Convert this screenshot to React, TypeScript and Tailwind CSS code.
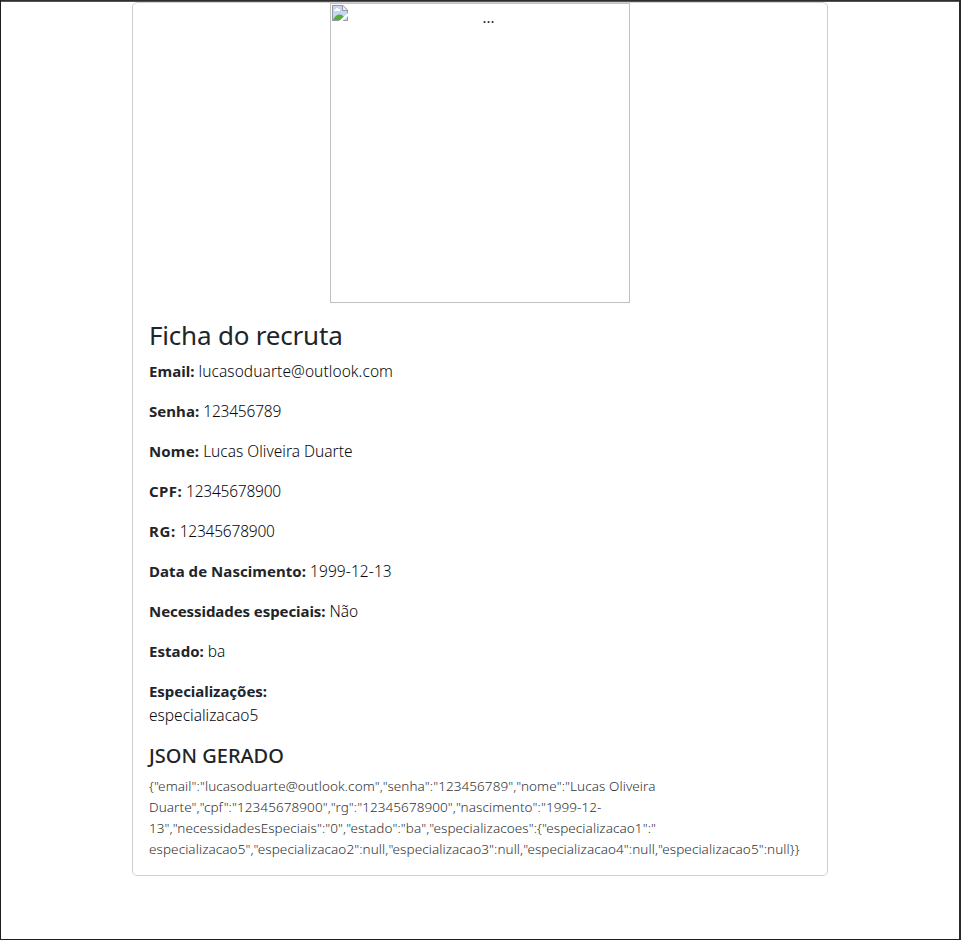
type Field = { label: string; labelTracking: string; value: string; valueTracking: string };

const fields: Field[] = [
  { label: "Email:", labelTracking: "tracking-[0.05px]", value: "lucasoduarte@outlook.com", valueTracking: "tracking-[0.07px]" },
  { label: "Senha:", labelTracking: "tracking-[0.05px]", value: "123456789", valueTracking: "tracking-[-0.2px]" },
  { label: "Nome:", labelTracking: "tracking-[0.15px]", value: "Lucas Oliveira Duarte", valueTracking: "" },
  { label: "CPF:", labelTracking: "tracking-[0.4px]", value: "12345678900", valueTracking: "tracking-[-0.22px]" },
  { label: "RG:", labelTracking: "tracking-[0.6px]", value: "12345678900", valueTracking: "tracking-[-0.22px]" },
  { label: "Data de Nascimento:", labelTracking: "tracking-[0.05px]", value: "1999-12-13", valueTracking: "tracking-[0.1px]" },
  { label: "Necessidades especiais:", labelTracking: "tracking-[-0.07px]", value: "Não", valueTracking: "" },
  { label: "Estado:", labelTracking: "tracking-[0.05px]", value: "ba", valueTracking: "tracking-[-0.2px]" },
];

const jsonLines = [
  '{"email":"lucasoduarte@outlook.com","senha":"123456789","nome":"Lucas Oliveira',
  'Duarte","cpf":"12345678900","rg":"12345678900","nascimento":"1999-12-',
  '13","necessidadesEspeciais":"0","estado":"ba","especializacoes":{"especializacao1":"',
  'especializacao5","especializacao2":null,"especializacao3":null,"especializacao4":null,"especializacao5":null}}',
];

function BrokenImageIcon() {
  return (
    <svg width="16" height="16" viewBox="0 0 16 16" className="shrink-0">
      <path d="M0 0H11L16 5V16H0Z" fill="#9a9a9a" />
      <path d="M1 1H11V5H15V15H1Z" fill="#c3d6f8" />
      <path d="M2 5H3V4H4V3H6V4H8V6H2Z" fill="#fff" />
      <path d="M1 15C3 11 5 9.500 8 9.500C9.500 9.500 11 10.500 12 12L9 15Z" fill="#57ad3a" />
      <path d="M11 1L15 5H11Z" fill="#f0f0f0" />
      <path d="M10.500 0.500V5.500H15.500" fill="none" stroke="#9a9a9a" />
      <path d="M16 8L7 16H10.500L16 11Z" fill="#fff" />
    </svg>
  );
}

export default function App() {
  return (
    <div className="flex h-[940px] w-[961px] flex-col border-t border-r-2 border-b border-l border-t-[#302d2f] border-r-[#2a2a2e] border-b-[#1c1b1e] border-l-[#1b2024] bg-white font-['Noto_Sans','Open_Sans',sans-serif] text-[#212529]">
      <div className="h-px shrink-0 bg-[#575355]" />
      <main className="ml-[131px] flex h-[874px] w-[696px] flex-col rounded-[5px] border border-[#cfcfcf]">
        <div className="flex h-[300px] w-[300px] shrink-0 self-center border border-[#c0c0c0] p-px">
          <BrokenImageIcon />
          <span className="flex-1 pl-[1px] text-center text-[15px] leading-[24px]">...</span>
        </div>
        <section className="px-4 pt-4">
          <h1 className="mb-[7px] h-[33px] whitespace-nowrap text-[26px] font-normal leading-[33px] tracking-[-0.2px]">Ficha do recruta</h1>
          {fields.map((f) => (
            <p key={f.label} className="mb-4 flex h-6 items-baseline gap-1 whitespace-nowrap leading-6">
              <b className={`text-[15px] font-bold ${f.labelTracking}`}>{f.label}</b>
              <span className={`text-[15.5px] font-light text-[#08090b] ${f.valueTracking}`}>{f.value}</span>
            </p>
          ))}
          <div className="mb-[17px]">
            <p className="h-6 text-[15px] font-bold leading-6 tracking-[-0.05px]">Especializações:</p>
            <p className="h-6 text-[15.5px] font-light leading-6 text-[#08090b]">especializacao5</p>
          </div>
          <h2 className="mb-2 h-6 text-[20px] font-medium leading-6">JSON GERADO</h2>
          <div className="whitespace-nowrap text-[13.5px] font-light leading-[21px] tracking-[0.08px] text-[#303234]">
            {jsonLines.map((line) => (
              <p key={line}>{line}</p>
            ))}
          </div>
        </section>
      </main>
    </div>
  );
}
